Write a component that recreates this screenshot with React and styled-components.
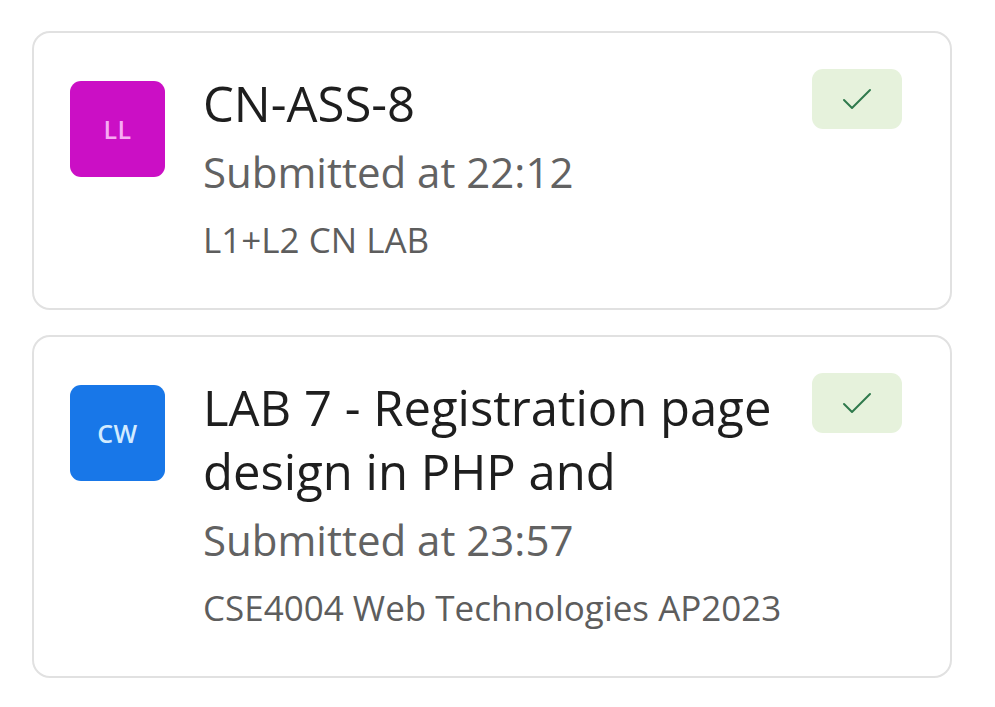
import React from 'react';
import styled, { createGlobalStyle } from 'styled-components';

const GlobalStyle = createGlobalStyle`
    html, body {
        margin: 0;
        padding: 0;
        background: #ffffff;
    }
    body {
        font-family: "Open Sans", "Noto Sans", sans-serif;
    }
`;

const items = [
    {
        initials: 'LL',
        color: '#cb0fc5',
        initialsColor: '#f8aaf3',
        title: 'CN-ASS-8',
        time: 'Submitted at 22:12',
        course: 'L1+L2 CN LAB',
    },
    {
        initials: 'CW',
        color: '#1877e8',
        initialsColor: '#d2ebff',
        title: 'LAB 7 - Registration page design in PHP and',
        time: 'Submitted at 23:57',
        course: 'CSE4004 Web Technologies AP2023240000000',
    },
];

const CheckIcon = () => (
    <svg width="30" height="22" viewBox="0 0 30 22" fill="none">
        <path d="M2 12 L10 20 L28 2" stroke="#2f7a4c" strokeWidth="2" strokeLinecap="round" strokeLinejoin="round" />
    </svg>
);

function SubmissionCard({ item }) {
    return (
        <Card>
            <Avatar color={item.color} textColor={item.initialsColor}>
                {item.initials}
            </Avatar>
            <Info>
                <Title>{item.title}</Title>
                <Time>{item.time}</Time>
                <Course>{item.course}</Course>
            </Info>
            <Badge>
                <CheckIcon />
            </Badge>
        </Card>
    );
}

export default function App() {
    return (
        <Page>
            <GlobalStyle />
            {items.map((item) => (
                <SubmissionCard key={item.title} item={item} />
            ))}
        </Page>
    );
}

const Page = styled.div`
    display: flex;
    flex-direction: column;
    gap: 25px;
    padding: 31px 43px 30px 32px;
`;

const Card = styled.div`
    display: grid;
    grid-template-columns: 95px 1fr 90px;
    column-gap: 38px;
    align-items: start;
    padding: 48px 48px 43px 36px;
    border: 2px solid #e1e1e1;
    border-radius: 18px;
    background: #ffffff;
`;

const Avatar = styled.div`
    width: 95px;
    height: 96px;
    border-radius: 11px;
    background: ${(p) => p.color};
    color: ${(p) => p.textColor};
    display: flex;
    align-items: center;
    justify-content: center;
    font-size: 25px;
    font-weight: 600;
    letter-spacing: 0.5px;
`;

const Info = styled.div`
    display: flex;
    flex-direction: column;
    min-width: 0;
    margin-top: -10px;
    margin-right: -6px;
`;

const Title = styled.div`
    font-size: 49px;
    line-height: 64px;
    color: #1e1e1e;
    max-height: 128px;
    overflow: hidden;
`;

const Time = styled.div`
    margin-top: 7px;
    font-size: 42px;
    line-height: 60px;
    color: #626262;
`;

const Course = styled.div`
    margin-top: 13px;
    font-size: 35px;
    line-height: 50px;
    color: #5d5d5d;
    white-space: nowrap;
    overflow: hidden;
`;

const Badge = styled.div`
    margin-top: -12px;
    width: 90px;
    height: 60px;
    border-radius: 11px;
    background: #e6f2dc;
    display: flex;
    align-items: center;
    justify-content: center;
`;
